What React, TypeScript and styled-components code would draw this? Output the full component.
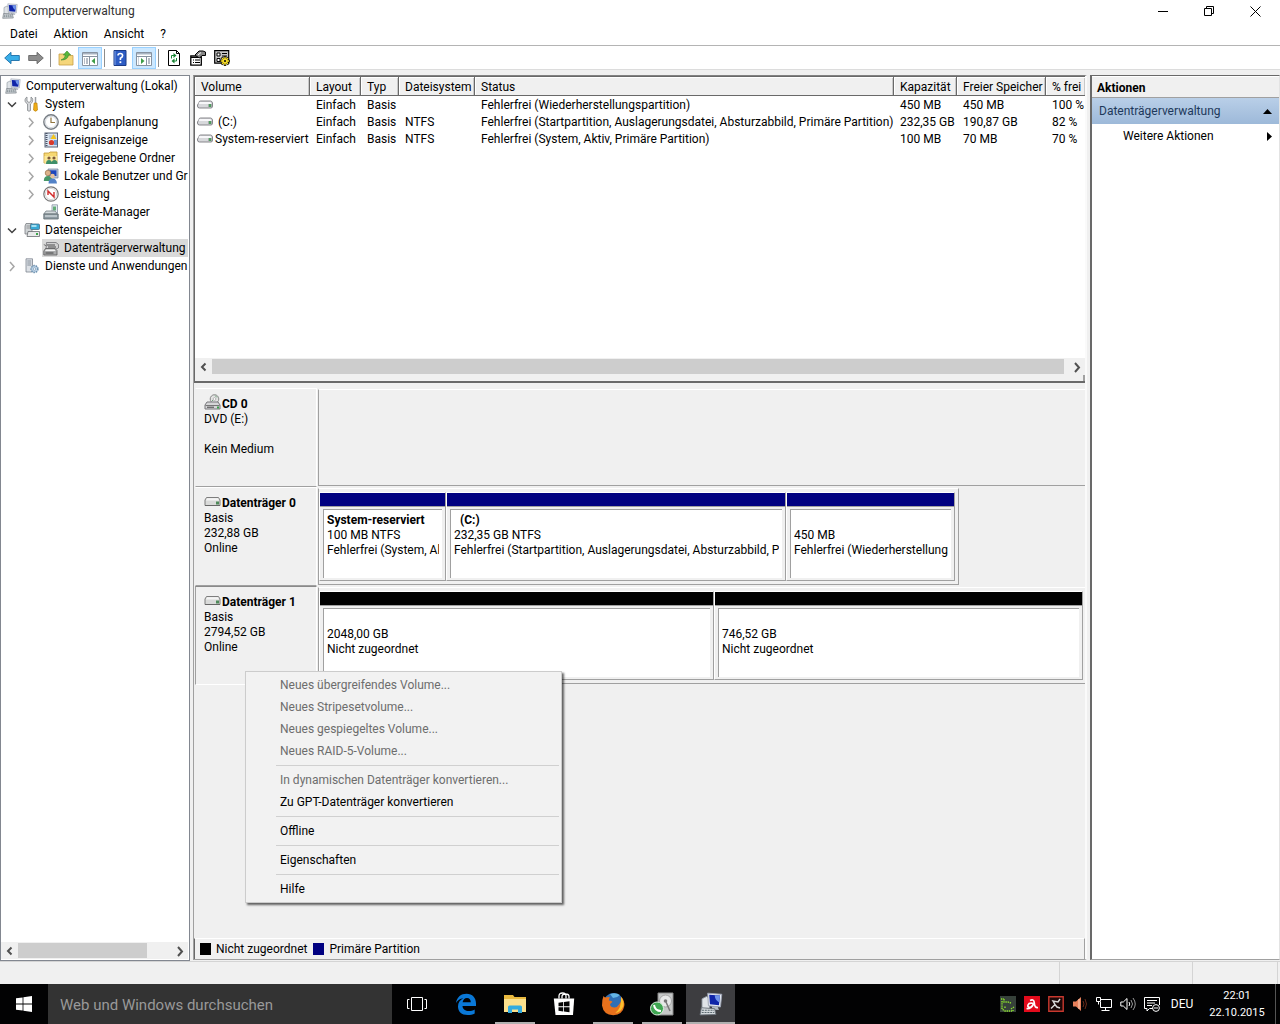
import React from "react";
import styled, { createGlobalStyle, css } from "styled-components";

const Global = createGlobalStyle`
  *, *::before, *::after { box-sizing: border-box; }
  body { margin: 0; background: #f0f0f0; }
  button, input { font: inherit; color: inherit; border: 0; padding: 0; background: none; }
  ul { list-style: none; margin: 0; padding: 0; }
  svg { display: block; flex: none; }
`;

const Page = styled.div`
  min-height: 100vh;
  display: flex;
  flex-direction: column;
  overflow: hidden;
  background: #f0f0f0;
  color: #000;
  font: 12px/18px Roboto, "Open Sans", sans-serif;
  white-space: nowrap;
`;

/* ---------- title, menu and tool bars ---------- */
const TitleBar = styled.header`
  display: flex;
  align-items: center;
  height: 22px;
  padding: 0 2px;
  gap: 5px;
  background: #fff;
  color: #333;
`;
const Title = styled.h1`
  margin: 0;
  flex: 1;
  font-size: 12px;
  font-weight: 400;
`;
const WindowButtons = styled.div`
  display: flex;
`;
const WindowButton = styled.button`
  width: 46px;
  height: 22px;
  display: grid;
  place-items: center;
`;
const MenuBar = styled.nav`
  display: flex;
  height: 24px;
  padding: 0 2px;
  background: #fff;
  border-bottom: 1px solid #b4b4b4;
`;
const MenuButton = styled.button`
  padding: 0 8px;
`;
const ToolBar = styled.div`
  display: flex;
  align-items: center;
  height: 24px;
  background: #fff;
  border-bottom: 1px solid #dcdcdc;
`;
const ToolButton = styled.button<{ $on?: boolean }>`
  width: 24px;
  height: 22px;
  display: grid;
  place-items: center;
  ${(p) => p.$on && css`background: #cce8ff; border: 1px solid #99d1ff;`}
`;
const ToolDivider = styled.span`
  width: 1px;
  height: 18px;
  margin: 0 3px 0 2px;
  background: #8c8c8c;
`;

/* ---------- panes ---------- */
const Workspace = styled.main`
  flex: 1;
  display: grid;
  grid-template-columns: 190px minmax(0, 1fr) 190px;
  column-gap: 3px;
  padding-top: 5px;
`;
const TreePane = styled.nav`
  display: flex;
  flex-direction: column;
  min-width: 0;
  background: #fff;
  border: 1px solid #828790;
  padding: 1px 1px 1px 0;
`;
const TreeList = styled.ul`
  flex: 1;
  overflow: hidden;
`;
const TreeItem = styled.li<{ $level: number }>`
  display: flex;
  align-items: center;
  height: 18px;
  padding-left: ${(p) => [4, 3, 22][p.$level]}px;
`;
const Twisty = styled.button`
  width: 16px;
  height: 18px;
  flex: none;
  margin-right: 3px;
`;
const NodeLabel = styled.span<{ $selected?: boolean }>`
  display: flex;
  align-items: center;
  flex: 1;
  gap: 5px;
  height: 18px;
  padding-left: 1px;
  background: ${(p) => (p.$selected ? "#d9d9d9" : "none")};
`;
const RootLabel = styled(NodeLabel)`
  padding: 0;
`;
const ScrollTrack = styled.div`
  display: flex;
  height: 17px;
  padding: 1px 0;
  background: #f0f0f0;
`;
const ScrollArrow = styled.button`
  width: 17px;
  display: grid;
  place-items: center;
`;
const ScrollRail = styled.div<{ $end: number }>`
  flex: 1;
  padding-right: ${(p) => p.$end}px;
`;
const ScrollThumb = styled.div`
  height: 15px;
  background: #cdcdcd;
`;

const CenterPane = styled.section`
  display: flex;
  flex-direction: column;
  min-width: 0;
  border: 1px solid #a0a0a0;
  border-right: 2px solid #fafafa;
  border-top-color: #828282;
  margin-bottom: 1px;
`;
const VolumePane = styled.div`
  display: flex;
  flex-direction: column;
  height: 307px;
  overflow: hidden;
  background: #fff;
  border: solid #696969;
  border-width: 1px 0 2px 1px;
`;
const VolumeArea = styled.div`
  flex: 1;
  overflow: hidden;
`;
const VolumeTable = styled.table`
  width: 100%;
  table-layout: fixed;
  border-collapse: separate;
  border-spacing: 0;
`;
const HeadCell = styled.th`
  height: 19px;
  padding: 1px 0 0 6px;
  text-align: left;
  font-weight: 400;
  line-height: 16px;
  background: #f0f0f0;
  border-right: 1px solid #696969;
  border-bottom: 1px solid #696969;
  box-shadow: inset 1px 1px #fff, inset -1px 0 #c8c8c8;
  &:last-child { border-right: 0; }
`;
const Cell = styled.td`
  height: 17px;
  padding: 1px 0 0 6px;
  line-height: 16px;
`;
const VolumeName = styled.div`
  display: flex;
  align-items: center;
  gap: 2px;
  height: 16px;
  margin-left: -4px;
  white-space: pre;
`;
const PaneEdge = styled.div`
  height: 6px;
  background: #f0f0f0;
  border-right: 2px solid #a0a0a0;
`;

const DiskPane = styled.div`
  flex: 1;
  padding: 5px 0 0 1px;
`;
const DiskRow = styled.article`
  position: relative;
  display: grid;
  grid-template-columns: 123px minmax(0, 1fr);
  height: 99px;
`;
const DiskLabel = styled.div<{ $focused?: boolean }>`
  padding: 8px 0 0 8px;
  line-height: 15px;
  border: 1px solid;
  border-color: ${(p) => (p.$focused ? "#8a8a8a #fff #fff #a0a0a0" : "#fff #fff #a0a0a0 #f0f0f0")};
  margin-right: 1px;
`;
const DiskName = styled.h2`
  display: flex;
  align-items: flex-end;
  gap: 1px;
  margin: 0;
  height: 15px;
  font-size: 12px;
  line-height: 15px;
  font-weight: 700;
`;
const DiskLine = styled.div`
  height: 15px;
`;
const DiskBody = styled.div<{ $capped?: boolean }>`
  display: flex;
  align-items: stretch;
  height: 97px;
  margin-top: 1px;
  padding: 3px 2px 3px 0;
  border: 1px solid #a0a0a0;
  border-top-color: #fff;
  ${(p) => (p.$capped ? css`max-width: 641px; padding-right: 3px;` : css`border-right: 0;`)}
`;
const Partition = styled.div<{ $share: number }>`
  flex: ${(p) => p.$share} 1 0;
  display: flex;
  flex-direction: column;
  min-width: 0;
  border: 1px solid;
  border-color: #fff #a0a0a0 #a0a0a0 #fff;
`;
const PartitionBar = styled.div<{ $color: string }>`
  height: 14px;
  background: ${(p) => p.$color};
  border-bottom: 1px solid #a0a0a0;
`;
const PartitionBox = styled.div`
  flex: 1;
  margin: 2px 3px;
  padding: 3px 3px 0;
  line-height: 15px;
  background: #fff;
  border: solid #a0a0a0;
  border-width: 1px 0 0 1px;
`;
const PartitionLine = styled.div<{ $bold?: boolean }>`
  height: 15px;
  overflow: hidden;
  white-space: pre;
  font-weight: ${(p) => (p.$bold ? 700 : 400)};
`;
const Legend = styled.div`
  display: flex;
  align-items: center;
  gap: 6px;
  height: 21px;
  padding-left: 5px;
  border: solid #a0a0a0;
  border-width: 0 1px 0 1px;
  border-left-color: #696969;
  border-top: 1px solid #fff;
`;
const LegendItem = styled.span`
  display: flex;
  align-items: center;
  gap: 5px;
`;
const Swatch = styled.i<{ $color: string }>`
  width: 11px;
  height: 12px;
  background: ${(p) => p.$color};
`;

const ContextMenu = styled.div`
  position: absolute;
  z-index: 2;
  top: 85px;
  left: 50px;
  width: 317px;
  padding: 2px;
  background: #f2f2f2;
  border: 1px solid #ccc;
  box-shadow: 2px 2px 2px rgba(0, 0, 0, 0.6);
`;
const ContextItem = styled.button`
  display: block;
  width: 100%;
  height: 22px;
  padding-left: 32px;
  text-align: left;
  &:disabled { color: #6d6d6d; }
`;
const ContextDivider = styled.hr`
  height: 1px;
  margin: 3px 0 3px 28px;
  border: 0;
  background: #d0d0d0;
`;

const ActionPane = styled.aside`
  padding-top: 1px;
  background: #fff;
  border: 1px solid #a0a0a0;
  border-top-color: #696969;
  border-left: 2px solid #696969;
  border-right-color: #e3e3e3;
  margin-bottom: 1px;
`;
const ActionTitle = styled.h2`
  height: 21px;
  margin: 0;
  padding-left: 5px;
  font-size: 12px;
  line-height: 22px;
  font-weight: 700;
  background: #f0f0f0;
  border-bottom: 1px solid #a0a0a0;
`;
const ActionGroup = styled.button`
  display: flex;
  width: 100%;
  height: 26px;
  padding: 0 7px;
  align-items: center;
  justify-content: space-between;
  color: #1e395b;
  background: linear-gradient(#b9cfe8, #9db9d9);
`;
const ActionItem = styled(ActionGroup)`
  height: 24px;
  padding-left: 31px;
  color: #000;
  background: none;
`;

const StatusBar = styled.footer`
  display: flex;
  justify-content: flex-end;
  height: 23px;
  padding-right: 2px;
  border-top: 1px solid #d4d4d4;
`;
const StatusCell = styled.span<{ $width: number }>`
  width: ${(p) => p.$width}px;
  border-left: 1px solid #d4d4d4;
  &:last-child { border-right: 1px solid #d4d4d4; }
`;

/* ---------- task bar ---------- */
const TaskBar = styled.footer`
  display: flex;
  height: 40px;
  background: #020203;
  color: #fff;
`;
const StartButton = styled.button`
  width: 48px;
  display: grid;
  place-items: center;
`;
const SearchBox = styled.input`
  width: 344px;
  padding: 2px 12px 0;
  background: #333;
  font-size: 15px;
  &::placeholder { color: #999; opacity: 1; }
`;
const TaskButton = styled.button<{ $open?: boolean; $active?: boolean }>`
  width: 49px;
  display: grid;
  place-items: center;
  background: ${(p) => (p.$active ? "#3d3d40" : "none")};
  ${(p) => p.$open && css`
    background-image: linear-gradient(#b0b0b0, #b0b0b0);
    background-repeat: no-repeat;
    background-position: center bottom;
    background-size: ${p.$active ? "100%" : "40px"} 2px;
  `}
`;
const Tray = styled.div`
  display: flex;
  align-items: center;
  margin-left: auto;
`;
const TrayButton = styled.button`
  width: 24px;
  height: 40px;
  display: grid;
  place-items: center;
`;
const Language = styled.button`
  width: 34px;
  margin-left: 1px;
`;
const Clock = styled.button`
  width: 76px;
  font-size: 11px;
  line-height: 17px;
`;
const ShowDesktop = styled.button`
  width: 5px;
  height: 40px;
  border-left: 1px solid #555;
`;

/* ---------- icons ---------- */
const Svg = ({ size = 16, children }: { size?: number; children: React.ReactNode }) => (
  <svg width={size} height={size} viewBox="0 0 16 16" aria-hidden="true">{children}</svg>
);
const ComputerIcon = ({ size }: { size?: number }) => (
  <Svg size={size}>
    <path d="M2 4.500L5 3l2 1v7H2z" fill="#dfe3e7" stroke="#8c939c" strokeWidth=".6" />
    <path d="M5.800.800l9.400.7-.9 8.500-8-.8z" fill="#e4e8f0" stroke="#9aa2b2" strokeWidth=".6" />
    <path d="M6.800 1.900l7.200.5-.7 6.400-6-.6z" fill="#0f24a8" />
    <path d="M10.500 2.200l3.500.2-.5 4.600c-2-1-3-2.800-3-4.800z" fill="#6f94ea" />
    <path d="M8.500 9.600l4 .4.800 2-4.300-.3z" fill="#b4bac4" />
    <path d="M1.600 10.500l8.800.6.9 3.900-10.600.3z" fill="#d3d8dc" stroke="#697078" strokeWidth=".6" />
    <path d="M2 12.200h8M1.800 13.700h8.400" stroke="#5b6a70" strokeWidth=".7" strokeDasharray="1.300 .6" />
  </Svg>
);
const DriveIcon = () => (
  <Svg>
    <path d="M2 5.500Q2 4 3.500 4h10Q15 4 15.500 6v3Q15.500 11 14 11H2.500Q.5 11 .5 9V8z" fill="#d7d8db" stroke="#7b7b80" strokeWidth=".9" />
    <path d="M2.500 5h11l.8 2H1.500z" fill="#f7f7f9" />
    <rect x="11.500" y="7" width="3" height="3" fill="#77857b" />
    <path d="M13 7v3" stroke="#27b643" />
  </Svg>
);
const DiscDriveIcon = () => (
  <svg width="17" height="18" viewBox="0 0 17 18" aria-hidden="true">
    <circle cx="10.500" cy="5" r="4.300" fill="#e4e4e4" stroke="#888" />
    <circle cx="10.500" cy="5" r="1.400" fill="#fff" stroke="#999" strokeWidth=".7" />
    <path d="M11 1.500l2 2M8 7l1-1" stroke="#69a075" />
    <path d="M3 8h11l2 3v4H1v-4z" fill="#d6d6d8" stroke="#77777b" />
    <path d="M1.500 11.500h14" stroke="#777" />
    <path d="M3 13.200h7" stroke="#444" />
    <rect x="13" y="12.500" width="2" height="2" fill="#3a9e4a" />
  </svg>
);
const DiskIcon = () => (
  <svg width="17" height="15" viewBox="0 0 17 15" aria-hidden="true">
    <path d="M2.500 1.500h12L16 4v5.500H1V4z" fill="#d9dad9" stroke="#7d7d7d" />
    <path d="M3 2.300h11l1 2.200H2z" fill="#f4f4f4" />
    <path d="M1 9.500h15" stroke="#666" />
    <rect x="12" y="5.500" width="3" height="3" fill="#4f8a5a" />
  </svg>
);
const ToolsIcon = () => (
  <Svg>
    <path d="M3 1v4l2 1.500L7 5V1c2 1 2.400 4 .8 5.800L6.500 8v6.500q-1.500 1.500-3 0V8L2 6.800C.2 5 1 2 3 1z" fill="#d4d6d9" stroke="#777b80" strokeWidth=".7" />
    <path d="M11.500 1v6" stroke="#9a9da2" strokeWidth="1.500" />
    <path d="M10 7h3l.5 7q-2 2.500-4 0z" fill="#efad16" stroke="#b57a09" strokeWidth=".6" />
  </Svg>
);
const ClockIcon = () => (
  <Svg>
    <circle cx="8" cy="8" r="7.200" fill="#f4f6f7" stroke="#777d84" strokeWidth="1.400" />
    <circle cx="8" cy="8" r="5.600" fill="#fff" stroke="#c6ccd2" strokeWidth=".7" />
    <path d="M8 3.500V8.500h4" fill="none" stroke="#907540" strokeWidth="1.200" />
  </Svg>
);
const EventIcon = () => (
  <Svg>
    <rect x="2" y="1" width="12.500" height="14" fill="#d9e4f1" stroke="#5a6478" />
    <path d="M3.500 1v14" stroke="#4a5264" strokeWidth="2" strokeDasharray="1 1" />
    <path d="M6 4h7M6 6h7M6 12h7" stroke="#8197b5" strokeWidth=".8" />
    <path d="M10.500 2l3 5h-6z" fill="#f4c51d" />
    <circle cx="8.500" cy="10.500" r="2.600" fill="#d83a2c" />
    <path d="M11 8h3v5h-3z" fill="#7096d0" />
  </Svg>
);
const FolderIcon = () => (
  <Svg>
    <path d="M1 3h5l1-1h7v11H1z" fill="#f6d873" stroke="#c49b36" strokeWidth=".8" />
    <path d="M1.500 6H14v7H1.500z" fill="#fae798" />
    <circle cx="6" cy="8" r="1.600" fill="#7d5938" />
    <circle cx="11" cy="8" r="1.600" fill="#7d5938" />
    <path d="M3 14q0-4 3-4t3 4zM8.500 14q0-4 3-4t3 4z" fill="#3f8f68" />
  </Svg>
);
const UsersIcon = () => (
  <Svg>
    <path d="M5 1h10v9H6z" fill="#bac7dc" stroke="#717f99" strokeWidth=".7" />
    <path d="M6.500 2.300h7V8h-7z" fill="#1d46bd" />
    <circle cx="5" cy="5" r="2.800" fill="#dcb28b" stroke="#8a6238" strokeWidth=".6" />
    <path d="M.8 13q0-5 4.200-5t4.200 5z" fill="#489868" />
    <circle cx="9.500" cy="8" r="2.300" fill="#e7c19c" />
    <path d="M5.500 15.500q0-5 4-5t4.500 5z" fill="#5382c7" />
  </Svg>
);
const GaugeIcon = () => (
  <Svg>
    <circle cx="8" cy="8" r="7.200" fill="#fff" stroke="#777" strokeWidth="1.200" />
    <circle cx="8" cy="8" r="5.600" fill="none" stroke="#c4c4c4" strokeWidth=".7" />
    <path d="M5 9V5l6 6V6" fill="none" stroke="#d02b2b" strokeWidth="1.400" />
  </Svg>
);
const DeviceIcon = () => (
  <Svg>
    <path d="M9 .8h5.500V9H9z" fill="#e2eaf1" stroke="#8993a1" strokeWidth=".8" />
    <path d="M10 2.500h3v4h-3z" fill="#62ac76" />
    <path d="M3 7h9l2.500 3H.8z" fill="#d4dadd" stroke="#768087" strokeWidth=".8" />
    <path d="M.8 10h14.400v5H.8z" fill="#8e9ba2" stroke="#5f6a70" strokeWidth=".8" />
    <path d="M2 12h12" stroke="#e7ecef" />
  </Svg>
);
const StorageIcon = () => (
  <Svg>
    <path d="M2 1.500h6V12H1V4z" fill="#cfd3d5" stroke="#7b7f83" strokeWidth=".8" />
    <path d="M2.500 4h4M2.500 6h4" stroke="#7b7f83" strokeWidth=".7" />
    <rect x="6.500" y="2" width="9" height="5.500" rx="1" fill="#38a9d5" stroke="#476d85" strokeWidth=".8" />
    <path d="M7.500 3h5v2h-5z" fill="#a5e0f2" />
    <path d="M4 9.500h11.500v5H3z" fill="#e8e9ea" stroke="#696d71" strokeWidth=".8" />
    <rect x="12" y="11" width="2" height="2" fill="#3ca54b" />
  </Svg>
);
const DiskMgmtIcon = () => (
  <Svg>
    <path d="M3.500 2.500h9.500l2.500 2v3.500L13 9H3z" fill="#d0d0d1" stroke="#707073" strokeWidth=".8" />
    <path d="M4 5h8M5 7h8" stroke="#4d4d4f" />
    <path d="M2.500 8.500h9.500l2 2V15H.8v-4z" fill="#a9aaab" stroke="#5a5a5c" strokeWidth=".8" />
    <path d="M3 9.500h8.500l1 1.500H2z" fill="#f3f3f3" />
    <path d="M2.500 13h8" stroke="#444" />
    <path d="M.8 4.500L3.500 6" stroke="#777" />
  </Svg>
);
const ServiceIcon = () => (
  <Svg>
    <path d="M2 .8h6.500V14H2z" fill="#dde1e6" stroke="#7d858f" strokeWidth=".8" />
    <path d="M3.300 3h4M3.300 5h4M3.300 7h4" stroke="#6e7a86" strokeWidth=".8" />
    <circle cx="10.500" cy="11" r="3.400" fill="#bcd2e6" stroke="#6b8fae" strokeWidth="1.500" strokeDasharray="1.500 .9" />
    <circle cx="10.500" cy="11" r="1.200" fill="#fff" stroke="#6b8fae" strokeWidth=".6" />
  </Svg>
);

const ArrowIcon = ({ back }: { back?: boolean }) => (
  <Svg>
    {back
      ? <path d="M.7 8L7 2.300V5.500h8.300v5H7v3.200z" fill="#39aee8" stroke="#1b6ea8" strokeWidth=".9" />
      : <path d="M15.300 8L9 2.300V5.500H.7v5H9v3.200z" fill="#8d8d8d" stroke="#666" strokeWidth=".9" />}
  </Svg>
);
const UpFolderIcon = () => (
  <Svg>
    <path d="M1 4h5l1 1.500h8V15H1z" fill="#f5d67b" stroke="#c89f45" strokeWidth=".8" />
    <path d="M3 10q4-1 4.500-5H5.300L9 1l3.700 4h-2.200Q10 10 3 10z" fill="#59b83a" stroke="#35842a" strokeWidth=".6" />
  </Svg>
);
const PaneIcon = ({ right }: { right?: boolean }) => (
  <Svg>
    <path d="M.5 2.500h15v13H.5z" fill="#fff" stroke="#8793a1" />
    <path d="M1 3h14v1.500H1z" fill="#a8b4c2" />
    <path d="M1 6.500h14" stroke="#8793a1" />
    {right
      ? <><path d="M10.500 7v8" stroke="#8793a1" /><path d="M5 8l3.500 3L5 14z" fill="#3c9d46" /><path d="M12 9h2M12 11h2M12 13h2" stroke="#6c7b8c" /><path d="M2.500 7v8" stroke="#ccd3da" /></>
      : <><path d="M7.500 7v8" stroke="#8793a1" /><path d="M13 8l-3.500 3L13 14z" fill="#3c9d46" /><path d="M2 9h1M4 9h2M2 11h1M4 11h2M2 13h1M4 13h2" stroke="#6c7b8c" /></>}
  </Svg>
);
const HelpIcon = () => (
  <Svg>
    <path d="M2 .5h12v15H2z" fill="#2d5cc4" stroke="#1a3a86" />
    <path d="M3 1v14" stroke="#7fa0e4" />
    <path d="M6 5.500Q6 3.500 8.300 3.500T10.600 5.700Q10.600 7 8.400 8.200V10" fill="none" stroke="#fff" strokeWidth="1.600" />
    <rect x="7.500" y="11.300" width="1.800" height="1.800" fill="#fff" />
  </Svg>
);
const RefreshIcon = () => (
  <Svg>
    <path d="M2.500.5h8l3 3v12h-11z" fill="#fff" stroke="#000" />
    <path d="M10.500.5v3h3" fill="none" stroke="#000" />
    <path d="M5.500 8.500V5.500H8M10.500 8v3H8" fill="none" stroke="#178333" />
    <path d="M7.500 3l3 2.500-3 2.500zM8.500 8.500v5l-3-2.500z" fill="#178333" />
  </Svg>
);
const PropertiesIcon = () => (
  <Svg>
    <path d="M.8 6h10.500v9.200H.8z" fill="#fff" stroke="#000" strokeWidth="1.300" />
    <path d="M1 7.500h10M3 10h1M5 10h5M3 12.500h1M5 12.500h5" stroke="#000" strokeWidth="1.200" />
    <path d="M5 5l4-4h4l2.500 1v3.500H12L9.500 8 7 6.500z" fill="#888" stroke="#000" />
    <path d="M8 5l3-2.500" stroke="#fff" />
  </Svg>
);
const SettingsIcon = () => (
  <Svg>
    <path d="M.7.700h14v12.500H.7z" fill="#c6c6c6" stroke="#000" strokeWidth="1.200" />
    <path d="M3 3h3v3H3zM3 8.500h3v3H3z" fill="#fff" stroke="#000" />
    <path d="M8 3.500h5M8 6h5" stroke="#000" />
    <path d="M11 6v10M6 11h10M7.500 7.500l7 7M14.500 7.500l-7 7" stroke="#000" strokeWidth="2.400" />
    <path d="M11 6.700v8.600M6.700 11h8.600M8 8l6 6M14 8l-6 6" stroke="#f5dc27" strokeWidth="1.300" />
    <circle cx="11" cy="11" r="2.800" fill="#f5dc27" />
    <circle cx="11" cy="11" r="1" fill="#000" />
  </Svg>
);
const Chevron = ({ dir, color = "#505050", weight = 2 }: { dir: "left" | "right" | "down"; color?: string; weight?: number }) => (
  <Svg>
    <path
      d={{ left: "M9.500 4.500L6 8l3.500 3.500", right: "M6 4l4 4.500L6 13", down: "M4 6.500l4 4 4-4" }[dir]}
      fill="none" stroke={color} strokeWidth={weight}
    />
  </Svg>
);

const EdgeIcon = () => (
  <svg width="22" height="22" viewBox="0 0 22 22" aria-hidden="true">
    <path d="M1 10C2 4 6 .8 11.500.8 17.500.8 21 5 21 10.500V13H7.500c.2 3.500 3 5 6.200 5 2.300 0 4.300-.6 6-1.600v4.100c-2 1-4.300 1.500-7 1.500C6.500 22 3 18.500 3 13.500c0-3.800 2-6.800 5.300-8.300C5 5.500 2.500 7.500 1 10zm6.600-.7h8.200C15.800 7 14.500 5 12 5S8 7 7.600 9.300z" fill="#0a78d7" />
  </svg>
);
const ExplorerIcon = () => (
  <svg width="22" height="20" viewBox="0 0 22 20" aria-hidden="true">
    <path d="M0 1h9l1.500 2H22v15H0z" fill="#e9b93f" />
    <path d="M0 5h22v13H0z" fill="#fbe08c" />
    <path d="M4 19v-6q0-1.500 1.500-1.500h11Q18 11.500 18 13v6h-4v-3.500H8V19z" fill="#31abe0" />
  </svg>
);
const StoreIcon = () => (
  <svg width="22" height="24" viewBox="0 0 22 24" aria-hidden="true">
    <path d="M6 6.500V4q0-3 3.500-3T13 4v2.500M9 6.500V4.500Q9 2 12.500 2T16 4.500v2" fill="none" stroke="#fff" strokeWidth="1.300" />
    <path d="M.8 6.500h20.400L20 23H2.500z" fill="#fff" />
    <path d="M5.500 10.800l4.700-.7v4.200H5.500zM11 10l5.500-.8v5.100H11zM5.500 15.200h4.700v4.200l-4.700-.7zM11 15.200h5.500v5.100L11 19.500z" fill="#050505" />
  </svg>
);
const FirefoxIcon = () => (
  <svg width="24" height="24" viewBox="0 0 24 24" aria-hidden="true">
    <circle cx="12.500" cy="11" r="10" fill="#2f6fb5" />
    <path d="M9 2q6-2 10 1-3 3-7 3z" fill="#64b5e5" />
    <path d="M2.500 4q1 1.500 2.500 1.500 2-.8 4 0-1.500 1.500-1 3 3 0 3.500 1.500-2 1.200-2.500 2.500.5 3 4.500 3 3-.3 4.500-3Q21 9 20 4.500q4 4.500 3.300 9.500-1.500 8.500-11 9.300Q2.500 23 1 13.500.8 8 2.500 4z" fill="#e8711c" />
    <path d="M20 5q3.500 4 2.300 9-2 6-8 7 6.500-5 5.700-16z" fill="#fbc02d" />
  </svg>
);
const DiskToolIcon = () => (
  <svg width="24" height="24" viewBox="0 0 24 24" aria-hidden="true">
    <path d="M8 1h15v22H8z" fill="#c5c7c7" stroke="#888" />
    <circle cx="15.500" cy="9" r="6" fill="#e7e8e8" stroke="#a5a5a5" />
    <circle cx="15.500" cy="9" r="1.800" fill="#777" />
    <path d="M16 10l4 9" stroke="#777" strokeWidth="1.500" />
    <circle cx="7" cy="16.500" r="6.500" fill="#3fa652" stroke="#d7efdb" />
    <path d="M4 13q1 6 7 6" fill="none" stroke="#fff" strokeWidth="2" />
  </svg>
);
const WindowsIcon = () => (
  <Svg><path d="M0 2.300L6.600 1.400V7.600H0zM7.400 1.300L16 0v7.600H7.400zM0 8.400h6.600v6.200L0 13.700zM7.400 8.400H16V16l-8.600-1.300z" fill="#fff" /></Svg>
);
const TaskViewIcon = () => (
  <svg width="20" height="14" viewBox="0 0 20 14" aria-hidden="true">
    <path d="M4.500.5h11v13h-11zM2.500 2.500h-2v9h2M17.500 2.500h2v9h-2" fill="none" stroke="#fff" />
  </svg>
);
const trayIcons: { name: string; art: React.ReactNode }[] = [
  { name: "Task-Manager", art: <><path d="M0 0h16v16H0z" fill="#36413a" /><path d="M1 3h3M4 3v3h4l3 1M2 5v8l3 2h7M5 12v-2M14 11l-3 2M13 14v1" fill="none" stroke="#8de22d" strokeWidth="1.400" strokeDasharray="1.400 .8" /></> },
  { name: "Avira", art: <><path d="M0 0h16v16H0z" fill="#e30b1c" /><path d="M2.500 12.500q4.500.5 7-4.500M6 4.500q4-2 4.300 2.500.2 5 3.700 4.500M9.500 7.500Q5 6.500 4 9t3 2.500" fill="none" stroke="#fff" strokeWidth="1.700" /></> },
  { name: "Verbindung", art: <><path d="M.8.800h14.400v14.400H.8z" fill="#1b0808" stroke="#c8382e" strokeWidth="1.400" /><path d="M3 12.500l4-4 2 2.500 3 1M7 8.500L5 5l5 1 2-3" fill="none" stroke="#d8d8d8" strokeWidth="1.500" /></> },
  { name: "Audio", art: <><path d="M1 5.500h3L9 1v14l-5-4.500H1z" fill="#e7805b" /><path d="M7 3v10" stroke="#ffd1ba" /><path d="M11 5q2 3 0 6M13 3q3 5 0 10" fill="none" stroke="#6b2b19" /></> },
  { name: "Netzwerk", art: <path d="M4 3.500h11.500v8H4.500V6M.5 1.500h4v4h-4zM2.500 5.500v3M9.500 11.500v3M5.500 14.500h8" fill="none" stroke="#fff" /> },
  { name: "Lautstärke", art: <><path d="M.8 6h2.500L7 2.500v11L3.300 10H.8z" fill="none" stroke="#fff" /><path d="M9 6q1.500 2 0 4" fill="none" stroke="#fff" /><path d="M11 4q3 4 0 8M13 2q4.500 6 0 12" fill="none" stroke="#999" /></> },
  { name: "Benachrichtigungen", art: <><path d="M9 12.500H5.500L3 15v-2.500H.5V1.500h15V9" fill="none" stroke="#fff" /><path d="M3 4.500h10M3 7h8M3 9.500h5" stroke="#fff" /><circle cx="12" cy="12" r="3.400" fill="#020203" stroke="#fff" /><path d="M10 12h4" stroke="#fff" /></> },
];

/* ---------- data ---------- */
const NAVY = "#000080";
const BLACK = "#000";

const tree: { label: string; level: number; icon: React.ReactNode; open?: boolean; leaf?: boolean; selected?: boolean }[] = [
  { label: "System", level: 1, icon: <ToolsIcon />, open: true },
  { label: "Aufgabenplanung", level: 2, icon: <ClockIcon /> },
  { label: "Ereignisanzeige", level: 2, icon: <EventIcon /> },
  { label: "Freigegebene Ordner", level: 2, icon: <FolderIcon /> },
  { label: "Lokale Benutzer und Gruppen", level: 2, icon: <UsersIcon /> },
  { label: "Leistung", level: 2, icon: <GaugeIcon /> },
  { label: "Geräte-Manager", level: 2, icon: <DeviceIcon />, leaf: true },
  { label: "Datenspeicher", level: 1, icon: <StorageIcon />, open: true },
  { label: "Datenträgerverwaltung", level: 2, icon: <DiskMgmtIcon />, leaf: true, selected: true },
  { label: "Dienste und Anwendungen", level: 1, icon: <ServiceIcon /> },
];

const columns = [
  { label: "Volume", width: 115 },
  { label: "Layout", width: 51 },
  { label: "Typ", width: 38 },
  { label: "Dateisystem", width: 76 },
  { label: "Status", width: 419 },
  { label: "Kapazität", width: 63 },
  { label: "Freier Speicher", width: 89 },
  { label: "% frei", width: undefined },
];
const volumes = [
  ["", "Einfach", "Basis", "", "Fehlerfrei (Wiederherstellungspartition)", "450 MB", "450 MB", "100 %"],
  [" (C:)", "Einfach", "Basis", "NTFS", "Fehlerfrei (Startpartition, Auslagerungsdatei, Absturzabbild, Primäre Partition)", "232,35 GB", "190,87 GB", "82 %"],
  ["System-reserviert", "Einfach", "Basis", "NTFS", "Fehlerfrei (System, Aktiv, Primäre Partition)", "100 MB", "70 MB", "70 %"],
];

const disks = [
  { name: "CD 0", icon: <DiscDriveIcon />, lines: ["DVD (E:)", "", "Kein Medium"], parts: [] },
  {
    name: "Datenträger 0", icon: <DiskIcon />, lines: ["Basis", "232,88 GB", "Online"], capped: true,
    parts: [
      { share: 125, color: NAVY, lines: ["System-reserviert", "100 MB NTFS", "Fehlerfrei (System, Aktiv, Primäre Partition)"] },
      { share: 338, color: NAVY, lines: ["  (C:)", "232,35 GB NTFS", "Fehlerfrei (Startpartition, Auslagerungsdatei, Absturzabbild, Primäre Partition)"] },
      { share: 167, color: NAVY, lines: ["", "450 MB", "Fehlerfrei (Wiederherstellungspartition)"] },
    ],
  },
  {
    name: "Datenträger 1", icon: <DiskIcon />, lines: ["Basis", "2794,52 GB", "Online"], focused: true,
    parts: [
      { share: 393, color: BLACK, lines: ["", "2048,00 GB", "Nicht zugeordnet"] },
      { share: 367, color: BLACK, lines: ["", "746,52 GB", "Nicht zugeordnet"] },
    ],
  },
];

const menuGroups = [
  [
    { label: "Neues übergreifendes Volume...", disabled: true },
    { label: "Neues Stripesetvolume...", disabled: true },
    { label: "Neues gespiegeltes Volume...", disabled: true },
    { label: "Neues RAID-5-Volume...", disabled: true },
  ],
  [
    { label: "In dynamischen Datenträger konvertieren...", disabled: true },
    { label: "Zu GPT-Datenträger konvertieren", disabled: false },
  ],
  [{ label: "Offline", disabled: false }],
  [{ label: "Eigenschaften", disabled: false }],
  [{ label: "Hilfe", disabled: false }],
];

const HorizontalScroll = ({ end }: { end: number }) => (
  <ScrollTrack>
    <ScrollArrow aria-label="Nach links"><Chevron dir="left" /></ScrollArrow>
    <ScrollRail $end={end}><ScrollThumb /></ScrollRail>
    <ScrollArrow aria-label="Nach rechts"><Chevron dir="right" /></ScrollArrow>
  </ScrollTrack>
);

const DiskMenu = () => (
  <ContextMenu role="menu">
    {menuGroups.map((group, i) => (
      <React.Fragment key={i}>
        {i > 0 && <ContextDivider />}
        {group.map((item) => (
          <ContextItem key={item.label} role="menuitem" disabled={item.disabled}>{item.label}</ContextItem>
        ))}
      </React.Fragment>
    ))}
  </ContextMenu>
);

export default function App() {
  return (
    <Page>
      <Global />
      <TitleBar>
        <ComputerIcon />
        <Title>Computerverwaltung</Title>
        <WindowButtons>
          <WindowButton aria-label="Minimieren"><svg width="10" height="10"><path d="M0 5.500h10" stroke="#000" /></svg></WindowButton>
          <WindowButton aria-label="Verkleinern"><svg width="10" height="10"><path d="M.5 2.500h7v7h-7zM2.500 2.500v-2h7v7h-2" fill="none" stroke="#000" /></svg></WindowButton>
          <WindowButton aria-label="Schließen"><svg width="11" height="11"><path d="M.5.500l10 10M10.500.500l-10 10" stroke="#000" /></svg></WindowButton>
        </WindowButtons>
      </TitleBar>
      <MenuBar>
        {["Datei", "Aktion", "Ansicht", "?"].map((m) => <MenuButton key={m}>{m}</MenuButton>)}
      </MenuBar>
      <ToolBar>
        <ToolButton aria-label="Zurück"><ArrowIcon back /></ToolButton>
        <ToolButton aria-label="Vorwärts"><ArrowIcon /></ToolButton>
        <ToolDivider />
        <ToolButton aria-label="Eine Ebene nach oben"><UpFolderIcon /></ToolButton>
        <ToolButton $on aria-label="Konsolenstruktur"><PaneIcon /></ToolButton>
        <ToolDivider />
        <ToolButton aria-label="Hilfe"><HelpIcon /></ToolButton>
        <ToolButton $on aria-label="Aktionsbereich"><PaneIcon right /></ToolButton>
        <ToolDivider />
        <ToolButton aria-label="Aktualisieren"><RefreshIcon /></ToolButton>
        <ToolButton aria-label="Eigenschaften"><PropertiesIcon /></ToolButton>
        <ToolButton aria-label="Einstellungen"><SettingsIcon /></ToolButton>
      </ToolBar>

      <Workspace>
        <TreePane>
          <TreeList>
            <TreeItem $level={0}><RootLabel><ComputerIcon />Computerverwaltung (Lokal)</RootLabel></TreeItem>
            {tree.map((n) => (
              <TreeItem key={n.label} $level={n.level}>
                {n.leaf
                  ? <Twisty as="span" />
                  : <Twisty aria-label={n.label}><Chevron dir={n.open ? "down" : "right"} color={n.open ? "#404040" : "#a6a6a6"} weight={1.5} /></Twisty>}
                <NodeLabel $selected={n.selected}>{n.icon}{n.label}</NodeLabel>
              </TreeItem>
            ))}
          </TreeList>
          <HorizontalScroll end={24} />
        </TreePane>

        <CenterPane>
          <VolumePane>
            <VolumeArea>
              <VolumeTable>
                <colgroup>
                  {columns.map((c) => <col key={c.label} style={{ width: c.width }} />)}
                </colgroup>
                <thead>
                  <tr>{columns.map((c) => <HeadCell key={c.label} scope="col">{c.label}</HeadCell>)}</tr>
                </thead>
                <tbody>
                  {volumes.map((row, r) => (
                    <tr key={r}>
                      {row.map((text, i) => (
                        <Cell key={i}>{i === 0 ? <VolumeName><DriveIcon />{text}</VolumeName> : text}</Cell>
                      ))}
                    </tr>
                  ))}
                </tbody>
              </VolumeTable>
            </VolumeArea>
            <HorizontalScroll end={4} />
            <PaneEdge />
          </VolumePane>
          <DiskPane>
            {disks.map((d) => (
              <DiskRow key={d.name}>
                <DiskLabel $focused={d.focused}>
                  <DiskName>{d.icon}{d.name}</DiskName>
                  {d.lines.map((l, i) => <DiskLine key={i}>{l}</DiskLine>)}
                </DiskLabel>
                <DiskBody $capped={d.capped}>
                  {d.parts.map((p, i) => (
                    <Partition key={i} $share={p.share}>
                      <PartitionBar $color={p.color} />
                      <PartitionBox>
                        {p.lines.map((l, k) => <PartitionLine key={k} $bold={k === 0}>{l}</PartitionLine>)}
                      </PartitionBox>
                    </Partition>
                  ))}
                </DiskBody>
                {d.focused && <DiskMenu />}
              </DiskRow>
            ))}
          </DiskPane>
          <Legend>
            <LegendItem><Swatch $color={BLACK} />Nicht zugeordnet</LegendItem>
            <LegendItem><Swatch $color={NAVY} />Primäre Partition</LegendItem>
          </Legend>
        </CenterPane>

        <ActionPane>
          <ActionTitle>Aktionen</ActionTitle>
          <ActionGroup>Datenträgerverwaltung<svg width="9" height="5"><path d="M0 5L4.500 0 9 5z" fill="#000" /></svg></ActionGroup>
          <ActionItem>Weitere Aktionen<svg width="5" height="9"><path d="M0 0l5 4.500L0 9z" fill="#000" /></svg></ActionItem>
        </ActionPane>
      </Workspace>

      <StatusBar>
        <StatusCell $width={133} />
        <StatusCell $width={86} />
      </StatusBar>

      <TaskBar>
        <StartButton aria-label="Start"><WindowsIcon /></StartButton>
        <SearchBox type="search" aria-label="Suche" placeholder="Web und Windows durchsuchen" />
        <TaskButton aria-label="Taskansicht"><TaskViewIcon /></TaskButton>
        <TaskButton aria-label="Edge"><EdgeIcon /></TaskButton>
        <TaskButton $open aria-label="Explorer"><ExplorerIcon /></TaskButton>
        <TaskButton aria-label="Store"><StoreIcon /></TaskButton>
        <TaskButton $open aria-label="Firefox"><FirefoxIcon /></TaskButton>
        <TaskButton $open aria-label="Datenträgertool"><DiskToolIcon /></TaskButton>
        <TaskButton $open $active aria-label="Computerverwaltung"><ComputerIcon size={24} /></TaskButton>
        <Tray>
          {trayIcons.map((t) => <TrayButton key={t.name} aria-label={t.name}><Svg>{t.art}</Svg></TrayButton>)}
          <Language>DEU</Language>
          <Clock>22:01<br />22.10.2015</Clock>
          <ShowDesktop aria-label="Desktop anzeigen" />
        </Tray>
      </TaskBar>
    </Page>
  );
}
